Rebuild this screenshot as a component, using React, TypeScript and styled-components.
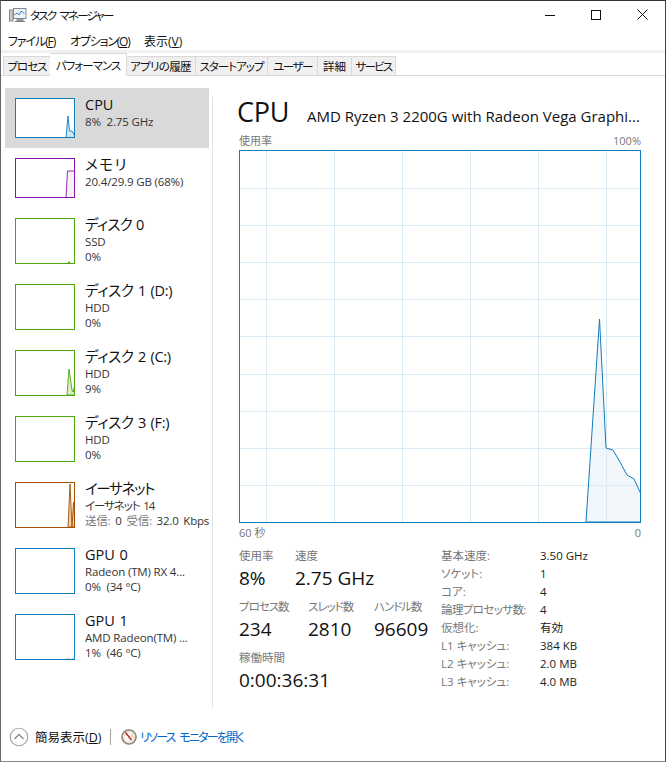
import React from "react";
import styled, { createGlobalStyle } from "styled-components";

const Global = createGlobalStyle`
  html, body { margin: 0; padding: 0; background: #fff; }
  body { font-family: "Open Sans", "Noto Sans CJK JP", sans-serif; color: #000; }
  * { box-sizing: border-box; }
`;
const FONT = `"Open Sans", "Noto Sans CJK JP", sans-serif`;

const Window = styled.div`
  width: 666px; height: 762px; display: flex; flex-direction: column; background: #fff;
  border-top: 1px solid #333; border-left: 1px solid #666; border-right: 1px solid #444; border-bottom: 1px solid #888;
  font-family: ${FONT}; font-feature-settings: "palt"; overflow: hidden;
`;
const Spaced = styled.span<{ $ls: number }>`
  letter-spacing: ${(p) => p.$ls}px; word-spacing: 2px;
`;
const TitleBar = styled.div`
  height: 27px; display: flex; align-items: center; padding-left: 8px; flex: none;
`;
const TitleText = styled.span`
  font-size: 11.5px; margin-left: 3px; flex: 1; color: #111; letter-spacing: -1.8px; word-spacing: 3px;
`;
const CtrlButton = styled.div`
  width: 46px; height: 27px; display: flex; align-items: center; justify-content: center;
`;
const MenuBar = styled.div`
  height: 22px; display: flex; align-items: center; padding: 3px 0 0 7px; flex: none;
`;
const MenuItem = styled.span<{ $w: number }>`
  font-size: 12px; width: ${(p) => p.$w}px; color: #111; white-space: nowrap;
`;
const TabStrip = styled.div`
  height: 26px; flex: none; display: flex; align-items: flex-end; padding-left: 2px;
  border-top: 3px solid #f0f0f0; border-bottom: 1px solid #d9d9d9; 
`;
const Tab = styled.div<{ $w: number; $ls: number; $active?: boolean }>`
  width: ${(p) => p.$w}px; height: ${(p) => (p.$active ? 23 : 19)}px; font-size: 11.5px;
  letter-spacing: ${(p) => p.$ls}px;
  display: flex; align-items: center; justify-content: center; white-space: nowrap;
  background: ${(p) => (p.$active ? "#fff" : "#f0f0f0")}; color: #111;
  border: 1px solid #d9d9d9; border-bottom: none;
  margin-left: ${(p) => (p.$active ? -1 : 0)}px; margin-right: ${(p) => (p.$active ? -1 : 0)}px;
  position: relative; z-index: ${(p) => (p.$active ? 1 : 0)};
  margin-bottom: ${(p) => (p.$active ? -1 : 0)}px;
  padding-bottom: ${(p) => (p.$active ? 1 : 0)}px;
  & + & { border-left: ${(p) => (p.$active ? "1px solid #d9d9d9" : "none")}; }
`;
const Body = styled.div`
  flex: 1; display: flex; min-height: 0;
`;
const Sidebar = styled.div`
  width: 208px; padding: 12px 0 0 4px; flex: none; display: flex; flex-direction: column;
`;
const Row = styled.div<{ $h: number; $selected?: boolean }>`
  width: 204px; height: ${(p) => p.$h}px; flex: none; display: flex; padding: 10px 0 0 10px;
  background: ${(p) => (p.$selected ? "#d9d9d9" : "transparent")};
`;
const Thumb = styled.svg<{ $h: number }>`
  width: 60px; height: ${(p) => p.$h}px; flex: none; display: block;
`;
const RowText = styled.div`
  margin-left: 10px; margin-top: -3px; display: flex; flex-direction: column; white-space: pre;
`;
const RowName = styled.div<{ $ls: number }>`
  font-size: 14.5px; line-height: 19px; color: #111; height: 19px; letter-spacing: ${(p) => p.$ls}px; word-spacing: 1px;
`;
const RowSub = styled.div`
  font-size: 11.5px; line-height: 15px; color: #333; letter-spacing: -0.15px;
`;
const Muted = styled.span`
  color: #777;
`;
const Divider = styled.div`
  width: 1px; background: #e4e4e4; margin-top: 21px; flex: none; margin-left: 3px;
`;
const Main = styled.div`
  flex: 1; padding: 18px 0 0 26px; display: flex; flex-direction: column; min-width: 0;
`;
const Heading = styled.div`
  height: 36px; display: flex; align-items: center; white-space: nowrap; flex: none;
`;
const HeadTitle = styled.span`
  font-size: 27px; width: 70px; margin: 0 0 2px -2px; color: #111; letter-spacing: -0.3px;
`;
const HeadModel = styled.span`
  font-size: 15px; color: #111; margin-top: 8px;
`;
const AxisRow = styled.div<{ $mt: number }>`
  width: 402px; height: 14px; margin-top: ${(p) => p.$mt}px; flex: none; display: flex; justify-content: space-between;
  font-size: 11px; line-height: 14px; color: #777;
`;
const Graph = styled.svg`
  width: 402px; height: 373px; display: block; margin-top: 2px; flex: none;
`;
const Stats = styled.div`
  margin-top: 8px; display: flex; flex: none;
`;
const StatsLeft = styled.div`
  width: 202px; display: flex; flex-direction: column; gap: 8px;
`;
const StatGroup = styled.div`
  display: flex;
`;
const Stat = styled.div<{ $w: number }>`
  width: ${(p) => p.$w}px; flex: none; white-space: nowrap;
`;
const StatLabel = styled.div<{ $ls?: number }>`
  font-size: 11.5px; line-height: 16px; height: 17px; color: #777; letter-spacing: ${(p) => p.$ls ?? 0}px;
`;
const StatValue = styled.div`
  font-size: 19px; line-height: 26px; color: #111;
`;
const SpecGrid = styled.div`
  display: grid; grid-template-columns: 99px auto; grid-auto-rows: 18px; align-content: start;
  font-size: 11.5px; line-height: 18px; white-space: nowrap; margin-top: -1px;
`;
const SpecKey = styled.span<{ $ls?: number }>`
  color: #777; letter-spacing: ${(p) => p.$ls ?? 0}px;
`;
const SpecVal = styled.span`
  color: #222;
`;
const Footer = styled.div`
  height: 53px; flex: none; display: flex; align-items: center; padding: 4px 0 0 8px;
`;
const FooterLabel = styled.span`
  font-size: 12.5px; margin-left: 6px; color: #111; width: 75px; white-space: nowrap;
`;
const FooterSep = styled.div`
  width: 1px; height: 16px; background: #a0a0a0;
`;
const FooterLink = styled.span`
  font-size: 12px; color: #0066cc; margin-left: 3px; white-space: nowrap; letter-spacing: -1.75px; word-spacing: 3px;
`;
const FooterIcon = styled.svg`
  margin-left: 10px; flex: none;
`;

type Item = {
  h: number; color: string; fill: string; name: string; nameLs: number; lines: React.ReactNode[]; pts?: string; extra?: React.ReactNode; selected?: boolean; rowH: number;
};
const BLUE = "#117dbb", GREEN = "#4da60c", PURPLE = "#8b12ae", BROWN = "#a74f01";

const items: Item[] = [
  { rowH: 60, h: 40, selected: true, color: BLUE, fill: "#cfe5f3", name: "CPU", nameLs: 0, lines: ["8%  2.75 GHz"], pts: "51,39.5 53,18 54.5,33 57,33 60,38 60,39.5" },
  { rowH: 60, h: 40, color: PURPLE, fill: "#f4f2f4", name: "メモリ", nameLs: 1.5, lines: ["20.4/29.9 GB (68%)"], pts: "51,39.5 52.5,13 60,13 60,39.5" },
  { rowH: 66, h: 46, color: GREEN, fill: "#dbeccd", name: "ディスク 0", nameLs: -0.7, lines: ["SSD", "0%"], pts: "53,45 54,43.5 55,45" },
  { rowH: 66, h: 46, color: GREEN, fill: "#dbeccd", name: "ディスク 1 (D:)", nameLs: -0.3, lines: ["HDD", "0%"] },
  { rowH: 66, h: 46, color: GREEN, fill: "#dbeccd", name: "ディスク 2 (C:)", nameLs: -0.3, lines: ["HDD", "9%"], pts: "52,45 54,19 57,40 58,42 60,34 60,45" },
  { rowH: 66, h: 46, color: GREEN, fill: "#dbeccd", name: "ディスク 3 (F:)", nameLs: -0.3, lines: ["HDD", "0%"] },
  { rowH: 66, h: 46, color: BROWN, fill: "#eecdb0", name: "イーサネット", nameLs: -1.3, lines: [<Spaced key="a" $ls={-1.1}>イーサネット 14</Spaced>, <Spaced key="n" $ls={-0.2}><Muted>送信:</Muted> 0 <Muted>受信:</Muted> 32.0 Kbps</Spaced>], pts: "53,45 55,2 57,45 58.5,20 60,45" },
  { rowH: 66, h: 46, color: BLUE, fill: "#cfe5f3", name: "GPU 0", nameLs: 0, lines: ["Radeon (TM) RX 4...", "0%  (34 °C)"] },
  { rowH: 66, h: 46, color: BLUE, fill: "#cfe5f3", name: "GPU 1", nameLs: 0, lines: ["AMD Radeon(TM) ...", "1%  (46 °C)"], extra: <path d="M51.5 44.5h1.5M54 44.5h1.5M57 44.5h1.5" stroke="#a9c9de" strokeWidth="1" fill="none" /> },
];

const MiniGraph = ({ item }: { item: Item }) => (
  <Thumb $h={item.h} viewBox={`0 0 60 ${item.h}`}>
    <rect x="0.5" y="0.5" width="59" height={item.h - 1} fill="#fff" stroke={item.color} />
    {item.pts && <polygon points={item.pts} fill={item.fill} stroke={item.color} strokeWidth="0.9" />}
    {item.extra}
    <rect x="0.5" y="0.5" width="59" height={item.h - 1} fill="none" stroke={item.color} />
  </Thumb>
);

const vLines = [27, 95, 163, 231, 299, 367];
const hLines = [38, 75, 112, 149, 186, 224, 261, 298, 335];

const MainGraph = () => (
  <Graph viewBox="0 0 402 373">
    {vLines.map((x) => <line key={x} x1={x + 0.5} x2={x + 0.5} y1="0" y2="373" stroke="#d9eaf4" />)}
    {hLines.map((y) => <line key={y} y1={y + 0.5} y2={y + 0.5} x1="0" x2="402" stroke="#d9eaf4" />)}
    <polygon points="347,372 360.5,169 367,298 374,300 381,312 388,325 395,329 401.5,343 401.5,372" fill="#e0ecf5" fillOpacity="0.45" stroke={BLUE} strokeWidth="1" />
    <rect x="0.5" y="0.5" width="401" height="372" fill="none" stroke={BLUE} />
  </Graph>
);

const AppIcon = () => (
  <svg width="18" height="16" viewBox="0 0 18 16">
    <rect x="0.5" y="3" width="3.5" height="11" fill="#c8c8c8" stroke="#8a8a8a" />
    <rect x="4.5" y="1.5" width="12.5" height="10" fill="#eef3f8" stroke="#7d8a96" />
    <path d="M5.5 8l2.5-2 2 2 2.5-4 3 3" fill="none" stroke="#3f7fb5" strokeWidth="1" />
    <rect x="7.5" y="12" width="7" height="2" fill="#9a9a9a" />
    <rect x="6" y="14" width="10" height="1" fill="#777" />
  </svg>
);

const specs: [string, string, number?][] = [
  ["基本速度:", "3.50 GHz"],
  ["ソケット:", "1"],
  ["コア:", "4"],
  ["論理プロセッサ数:", "4", -0.6],
  ["仮想化:", "有効"],
  ["L1 キャッシュ:", "384 KB"],
  ["L2 キャッシュ:", "2.0 MB"],
  ["L3 キャッシュ:", "4.0 MB"],
];
const tabs: [string, number, number, boolean?][] = [
  ["プロセス", 48, -1], ["パフォーマンス", 77, -1, true], ["アプリの履歴", 70, -0.7], ["スタートアップ", 72, -1],
  ["ユーザー", 50, -1.5], ["詳細", 34, 0], ["サービス", 44, -1.8],
];

export default function App() {
  return (
    <Window>
      <Global />
      <TitleBar>
        <AppIcon />
        <TitleText>タスク マネージャー</TitleText>
        <CtrlButton>
          <svg width="10" height="10" viewBox="0 0 10 10"><path d="M0 5.5h10" stroke="#111" /></svg>
        </CtrlButton>
        <CtrlButton>
          <svg width="10" height="10" viewBox="0 0 10 10"><rect x="0.5" y="0.5" width="9" height="9" fill="none" stroke="#111" /></svg>
        </CtrlButton>
        <CtrlButton>
          <svg width="11" height="11" viewBox="0 0 11 11"><path d="M0.5 0.5l10 10M10.5 0.5l-10 10" stroke="#111" /></svg>
        </CtrlButton>
      </TitleBar>
      <MenuBar>
        <MenuItem $w={62}><Spaced $ls={-1.1}>ファイル(<u>F</u>)</Spaced></MenuItem>
        <MenuItem $w={74}><Spaced $ls={-1.2}>オプション(<u>O</u>)</Spaced></MenuItem>
        <MenuItem $w={50}>表示(<u>V</u>)</MenuItem>
      </MenuBar>
      <TabStrip>
        {tabs.map(([t, w, ls, a]) => <Tab key={t} $w={w} $ls={ls} $active={a}>{t}</Tab>)}
      </TabStrip>
      <Body>
        <Sidebar>
          {items.map((it) => (
            <Row key={it.name} $h={it.rowH} $selected={it.selected}>
              <MiniGraph item={it} />
              <RowText>
                <RowName $ls={it.nameLs}>{it.name}</RowName>
                {it.lines.map((l, i) => <RowSub key={i}>{l}</RowSub>)}
              </RowText>
            </Row>
          ))}
        </Sidebar>
        <Divider />
        <Main>
          <Heading>
            <HeadTitle>CPU</HeadTitle>
            <HeadModel>AMD Ryzen 3 2200G with Radeon Vega Graphi...</HeadModel>
          </Heading>
          <AxisRow $mt={4}><span>使用率</span><span>100%</span></AxisRow>
          <MainGraph />
          <AxisRow $mt={3}><span>60 秒</span><span>0</span></AxisRow>
          <Stats>
            <StatsLeft>
              <StatGroup>
                <Stat $w={56}><StatLabel>使用率</StatLabel><StatValue>8%</StatValue></Stat>
                <Stat $w={100}><StatLabel>速度</StatLabel><StatValue>2.75 GHz</StatValue></Stat>
              </StatGroup>
              <StatGroup>
                <Stat $w={69}><StatLabel $ls={-1}>プロセス数</StatLabel><StatValue>234</StatValue></Stat>
                <Stat $w={66}><StatLabel $ls={-1}>スレッド数</StatLabel><StatValue>2810</StatValue></Stat>
                <Stat $w={60}><StatLabel $ls={-1}>ハンドル数</StatLabel><StatValue>96609</StatValue></Stat>
              </StatGroup>
              <StatGroup>
                <Stat $w={100}><StatLabel>稼働時間</StatLabel><StatValue>0:00:36:31</StatValue></Stat>
              </StatGroup>
            </StatsLeft>
            <SpecGrid>
              {specs.map(([k, v, ls]) => (
                <React.Fragment key={k}>
                  <SpecKey $ls={ls}>{k}</SpecKey>
                  <SpecVal>{v}</SpecVal>
                </React.Fragment>
              ))}
            </SpecGrid>
          </Stats>
        </Main>
      </Body>
      <Footer>
        <svg width="20" height="20" viewBox="0 0 20 20">
          <circle cx="10" cy="10" r="8.75" fill="#fff" stroke="#a8a8a8" strokeWidth="1.2" />
          <path d="M5.5 12l4.5-4.5 4.5 4.5" fill="none" stroke="#8a8a8a" strokeWidth="1.3" />
        </svg>
        <FooterLabel>簡易表示(<u>D</u>)</FooterLabel>
        <FooterSep />
        <FooterIcon width="16" height="16" viewBox="0 0 16 16">
          <circle cx="8" cy="8" r="7" fill="#f7f3ec" stroke="#8d8478" strokeWidth="1.6" />
          <circle cx="8" cy="8" r="4.8" fill="#fff" stroke="#d8c9a8" strokeWidth="0.6" />
          <path d="M4.5 3.5L10.5 11" stroke="#c4281c" strokeWidth="1.5" />
          <path d="M11 5.5v3" stroke="#d9a54a" strokeWidth="1" />
        </FooterIcon>
        <FooterLink>リソース モニターを開く</FooterLink>
      </Footer>
    </Window>
  );
}
